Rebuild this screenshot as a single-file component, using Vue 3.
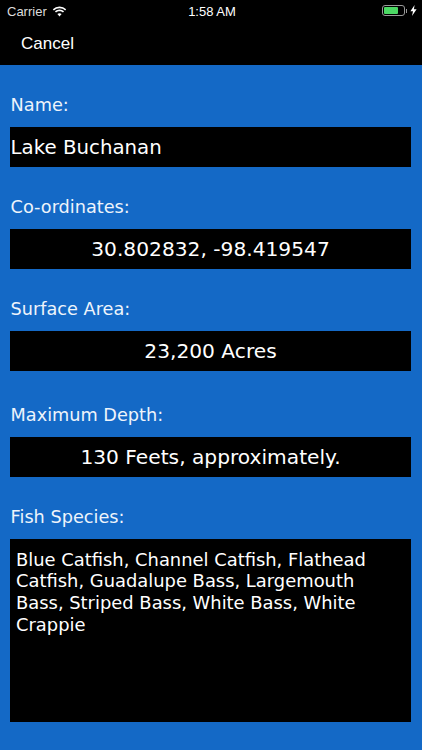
<script setup>
const fields = [
  { label: 'Name:', value: 'Lake Buchanan', cls: 'left', gap: 'g0' },
  { label: 'Co-ordinates:', value: '30.802832, -98.419547', cls: '', gap: 'g0' },
  { label: 'Surface Area:', value: '23,200 Acres', cls: '', gap: 'g1' },
  { label: 'Maximum Depth:', value: '130 Feets, approximately.', cls: '', gap: 'g0' },
]
</script>

<template>
  <div class="screen">
    <header class="top">
      <div class="status">
        <div class="status-left">
          <span>Carrier</span>
          <svg class="wifi" width="15" height="11" viewBox="0 0 15 11">
            <path d="M7.5 2.2c2.2 0 4.1.8 5.6 2.2l1.1-1.2A9.8 9.8 0 0 0 7.5.5 9.8 9.8 0 0 0 .8 3.2l1.1 1.2a8 8 0 0 1 5.6-2.2z" fill="#fff"/>
            <path d="M7.5 5.2c1.3 0 2.5.5 3.5 1.3l1.1-1.2a6.8 6.8 0 0 0-9.2 0L4 6.5c1-.8 2.2-1.3 3.5-1.3z" fill="#fff"/>
            <path d="M7.5 7.2c-.8 0-1.5.3-2.1.8l2.1 2.4L9.6 8c-.6-.5-1.3-.8-2.1-.8z" fill="#fff"/>
          </svg>
        </div>
        <span class="clock">1:58 AM</span>
        <div class="status-right">
          <div class="battery"><div class="level"></div></div>
          <div class="nub"></div>
          <svg class="bolt" width="7" height="11" viewBox="0 0 7 11"><path d="M4.6 0 .4 6.3h2.6L2 11l4.6-6.7H3.9z" fill="#fff"/></svg>
        </div>
      </div>
      <div class="nav">Cancel</div>
    </header>
    <main class="form">
      <section v-for="f in fields" :key="f.label" class="field" :class="f.gap">
        <label class="label">{{ f.label }}</label>
        <div class="box" :class="f.cls">{{ f.value }}</div>
      </section>
      <section class="field">
        <label class="label">Fish Species:</label>
        <div class="area">Blue Catfish, Channel Catfish, Flathead Catfish, Guadalupe Bass, Largemouth Bass, Striped Bass, White Bass, White Crappie</div>
      </section>
    </main>
  </div>
</template>

<style>
html, body { margin: 0; background: #1469c6; }
</style>

<style scoped>
.screen { width: 422px; height: 750px; background: #1469c6; overflow: hidden; display: flex; flex-direction: column; }
.top { background: #000; height: 65px; color: #fff; font-family: "Liberation Sans", Arial, sans-serif; flex: none; }
.status { height: 22px; display: grid; grid-template-columns: 1fr auto 1fr; align-items: center; padding: 0 5px 0 7px; font-size: 13px; }
.status-left { display: flex; align-items: center; gap: 5px; color: #ddd; }
.wifi { display: block; }
.status-right { display: flex; align-items: center; justify-content: flex-end; margin-bottom: 1px; }
.battery { width: 23px; height: 11px; border: 1px solid #999; border-radius: 3px; padding: 1px 0.5px; box-sizing: border-box; }
.level { width: 14px; height: 100%; background: #4cd964; border-radius: 1px; }
.nub { width: 1px; height: 4px; background: #999; margin: 0 3px 0 1px; }
.bolt { flex: none; display: block; }
.nav { font-size: 17px; padding: 12px 0 0 21px; line-height: 20px; }
.form { display: flex; flex-direction: column; padding: 0 11px 0 10px; font-family: "DejaVu Sans", Verdana, sans-serif; color: #fff; }
.field { display: flex; flex-direction: column; }
.label { font-size: 17.7px; line-height: 22px; margin-top: 29px; margin-bottom: 11px; padding-left: 0.6px; color: #eef4fb; }
.g1 { margin-bottom: 4px; }
.box { height: 40px; background: #000; display: flex; align-items: center; justify-content: center; font-size: 20.2px; }
.left { justify-content: flex-start; font-size: 19.8px; padding-left: 0.6px; }
.area { height: 183px; background: #000; box-sizing: border-box; padding: 9.5px 6px; font-size: 17.9px; line-height: 21.7px; }
</style>
